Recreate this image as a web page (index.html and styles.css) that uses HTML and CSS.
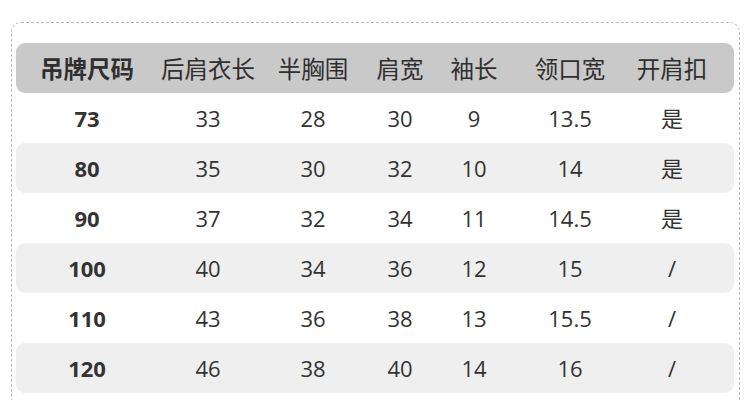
FILE: index.html
```html
<!DOCTYPE html>
<html lang="zh">
<head>
<meta charset="utf-8">
<link rel="stylesheet" href="styles.css">
</head>
<body>
<div class="card">
  <div class="row head">
    <div class="cell strong">吊牌尺码</div>
    <div class="cell">后肩衣长</div>
    <div class="cell">半胸围</div>
    <div class="cell">肩宽</div>
    <div class="cell">袖长</div>
    <div class="cell">领口宽</div>
    <div class="cell">开肩扣</div>
  </div>
  <div class="row">
    <div class="cell strong">73</div><div class="cell">33</div><div class="cell">28</div><div class="cell">30</div><div class="cell">9</div><div class="cell">13.5</div><div class="cell">是</div>
  </div>
  <div class="row alt">
    <div class="cell strong">80</div><div class="cell">35</div><div class="cell">30</div><div class="cell">32</div><div class="cell">10</div><div class="cell">14</div><div class="cell">是</div>
  </div>
  <div class="row">
    <div class="cell strong">90</div><div class="cell">37</div><div class="cell">32</div><div class="cell">34</div><div class="cell">11</div><div class="cell">14.5</div><div class="cell">是</div>
  </div>
  <div class="row alt">
    <div class="cell strong">100</div><div class="cell">40</div><div class="cell">34</div><div class="cell">36</div><div class="cell">12</div><div class="cell">15</div><div class="cell">/</div>
  </div>
  <div class="row">
    <div class="cell strong">110</div><div class="cell">43</div><div class="cell">36</div><div class="cell">38</div><div class="cell">13</div><div class="cell">15.5</div><div class="cell">/</div>
  </div>
  <div class="row alt">
    <div class="cell strong">120</div><div class="cell">46</div><div class="cell">38</div><div class="cell">40</div><div class="cell">14</div><div class="cell">16</div><div class="cell">/</div>
  </div>
</div>
</body>
</html>
```
FILE: styles.css
```css
html, body {
  margin: 0;
  padding: 0;
  background: #ffffff;
}
body {
  font-family: "Open Sans", "Noto Sans CJK SC", sans-serif;
  color: #333333;
}
.card {
  box-sizing: border-box;
  width: 729px;
  margin: 22px 0 0 11px;
  padding: 20px 5px 20px 4px;
  border: 1px dashed #b9b9b9;
  border-radius: 10px;
}
.row {
  display: grid;
  grid-template-columns: 142px 100px 110px 64px 84px 108px 96px 1fr;
  height: 50px;
  align-items: center;
  justify-items: center;
  border-radius: 9px;
  font-size: 22px;
}
.row.head {
  background: #c9c9c9;
  font-family: "Noto Sans CJK SC", sans-serif;
  font-size: 23.5px;
  color: #2f2f2f;
}
.row.alt {
  background: #efefef;
}
.cell {
  line-height: 1;
  white-space: nowrap;
}
.row.head .cell {
  padding-top: 2px;
}
.strong {
  font-weight: 700;
}
```
